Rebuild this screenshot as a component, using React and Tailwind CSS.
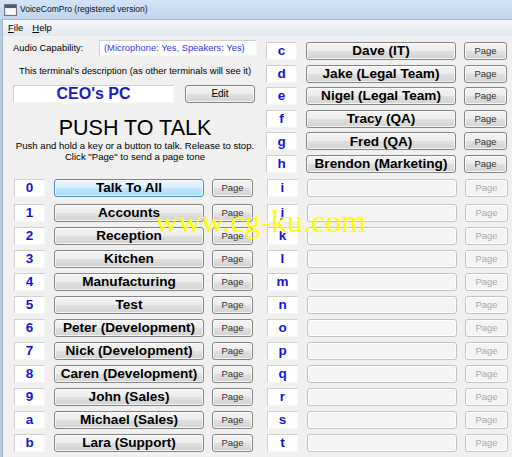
import React from "react";

const font = { fontFamily: '"Liberation Sans", Arial, sans-serif' };

const btnNormal =
  "rounded-[3px] border border-[#858585] bg-[linear-gradient(#f4f4f4_0%,#ececec_48%,#dfdfdf_52%,#d3d3d3_100%)] shadow-[inset_0_0_0_1px_rgba(255,255,255,0.75)]";
const btnHot =
  "rounded-[3px] border border-[#4a8fc8] bg-[linear-gradient(#eaf6fd_0%,#d9effc_48%,#bee6fd_52%,#a7d9f5_100%)] shadow-[inset_0_0_0_1px_rgba(255,255,255,0.7)]";
const btnDisabled =
  "rounded-[3px] border border-[#c3c3c3] bg-[#f4f4f4] shadow-[inset_0_0_0_1px_rgba(255,255,255,0.8)]";

function NumBox({ k }) {
  return (
    <div className="w-[31px] h-[18px] shrink-0 bg-white border border-t-[#cfcfcf] border-l-[#cfcfcf] border-b-[#f7f7f7] border-r-[#f7f7f7] flex items-center justify-center text-[13.5px] font-bold text-[#1414e0] leading-none">
      {k}
    </div>
  );
}

function Row({ k, name, hot, pageW }) {
  const disabled = !name;
  return (
    <div className="flex items-center h-[18px]">
      <NumBox k={k} />
      <div
        className={
          "ml-[9px] w-[150px] h-[18px] shrink-0 flex items-center justify-center text-[13.6px] font-bold text-black leading-none whitespace-nowrap " +
          (disabled ? btnDisabled : hot ? btnHot : btnNormal)
        }
      >
        {name}
      </div>
      <div
        className={
          "ml-[8px] h-[18px] shrink-0 flex items-center justify-center text-[9.5px] leading-none " +
          (pageW === 43 ? "w-[43px] " : "w-[41px] ") +
          (disabled ? btnDisabled + " text-[#a9a9a9]" : btnNormal + " text-[#333]")
        }
      >
        Page
      </div>
    </div>
  );
}

const leftRows = [
  ["0", "Talk To All", true],
  ["1", "Accounts"],
  ["2", "Reception"],
  ["3", "Kitchen"],
  ["4", "Manufacturing"],
  ["5", "Test"],
  ["6", "Peter (Development)"],
  ["7", "Nick (Development)"],
  ["8", "Caren (Development)"],
  ["9", "John (Sales)"],
  ["a", "Michael (Sales)"],
  ["b", "Lara (Support)"],
];
const rightTop = [
  ["c", "Dave (IT)"],
  ["d", "Jake (Legal Team)"],
  ["e", "Nigel (Legal Team)"],
  ["f", "Tracy (QA)"],
  ["g", "Fred (QA)"],
  ["h", "Brendon (Marketing)"],
];
const rightBottom = ["i", "j", "k", "l", "m", "n", "o", "p", "q", "r", "s", "t"];

export default function App() {
  return (
    <div className="relative w-[512px] h-[457px] overflow-hidden bg-[#f0f0f0] flex flex-col" style={font}>
      {/* Title bar */}
      <div className="h-[19px] shrink-0 flex items-center bg-[linear-gradient(#d3e3f6,#c0d5ee)]">
        <svg width="13" height="12" viewBox="0 0 13 12" className="ml-[4px]">
          <rect x="0.5" y="0.5" width="12" height="11" fill="#e8ecf1" stroke="#6d7684" />
          <rect x="1" y="1" width="11" height="3" fill="#4e5b6e" />
          <rect x="2" y="5" width="9" height="5" fill="#f8f9fb" />
        </svg>
        <span className="ml-[3px] text-[8.5px] text-[#111] leading-none">VoiceComPro (registered version)</span>
      </div>
      <div className="flex-1 flex">
        {/* left window frame */}
        <div className="w-[3px] shrink-0 bg-[#b6cbe4] border-r border-[#9fb3cb]" />
        <div className="flex-1 flex flex-col">
          {/* Menu bar */}
          <div className="h-[17px] shrink-0 flex items-center bg-[linear-gradient(#f7f9fc,#dfe6ef)] border-t border-[#a9b6c7] text-[9.5px] text-black leading-none">
            <span className="ml-[5px]"><span className="underline">F</span>ile</span>
            <span className="ml-[9px]"><span className="underline">H</span>elp</span>
          </div>
          {/* Top section */}
          <div className="flex pl-[10px]">
            {/* left header */}
            <div className="w-[244px] shrink-0 flex flex-col">
              <div className="mt-[4px] h-[16px] flex items-center">
                <span className="text-[9.4px] text-black leading-none">Audio Capability:</span>
                <div className="ml-auto w-[158px] h-[16px] bg-white border border-t-[#d0d0d0] border-l-[#d0d0d0] border-b-[#f7f7f7] border-r-[#f7f7f7] flex items-center pl-[4px] text-[9.4px] text-[#3434f2] leading-none">
                  (Microphone: Yes, Speakers: Yes)
                </div>
              </div>
              <div className="mt-[9px] h-[12px] text-center text-[9.4px] leading-[12px] text-black">
                This terminal's description (as other terminals will see it)
              </div>
              <div className="mt-[8px] h-[18px] flex items-center">
                <div className="w-[161px] h-[18px] bg-white border border-t-[#d0d0d0] border-l-[#d0d0d0] border-b-[#f7f7f7] border-r-[#f7f7f7] flex items-center justify-center text-[16px] font-bold text-[#1a1ad0] leading-none">
                  CEO's PC
                </div>
                <div className={"ml-[11px] w-[70px] h-[18px] flex items-center justify-center text-[10px] text-black leading-none " + btnNormal}>
                  Edit
                </div>
              </div>
              <div className="mt-[14px] h-[22px] text-center text-[21.5px] leading-[22px] text-black">PUSH TO TALK</div>
              <div className="mt-[1px] text-center text-[9.6px] leading-[11px] text-black">
                Push and hold a key or a button to talk. Release to stop.
              </div>
              <div className="text-center text-[9.6px] leading-[11px] text-black">Click "Page" to send a page tone</div>
            </div>
            {/* right top list */}
            <div className="ml-[9px] pt-[6px] flex flex-col gap-[4.6px]">
              {rightTop.map(([k, n]) => (
                <Row key={k} k={k} name={n} pageW={43} />
              ))}
            </div>
          </div>
          {/* Bottom rows */}
          <div className="absolute left-0 top-[179px] w-full pl-[14px] flex flex-col">
            {leftRows.map(([k, n, hot], i) => (
              <div key={k} className={"flex " + (i === 0 ? "" : i === 1 ? "mt-[7px]" : "mt-[5px]")}>
                <Row k={k} name={n} hot={hot} pageW={41} />
                <div className="ml-[14px]">
                  <Row k={rightBottom[i]} name="" pageW={43} />
                </div>
              </div>
            ))}
          </div>
        </div>
      </div>
      {/* watermark */}
      <div
        className="absolute left-[155px] top-[205px] text-[32px] leading-none text-[#ffff00] whitespace-nowrap pointer-events-none"
        style={{ fontFamily: '"Liberation Serif", "Times New Roman", serif' }}
      >
        www.cg-ku.com
      </div>
    </div>
  );
}
